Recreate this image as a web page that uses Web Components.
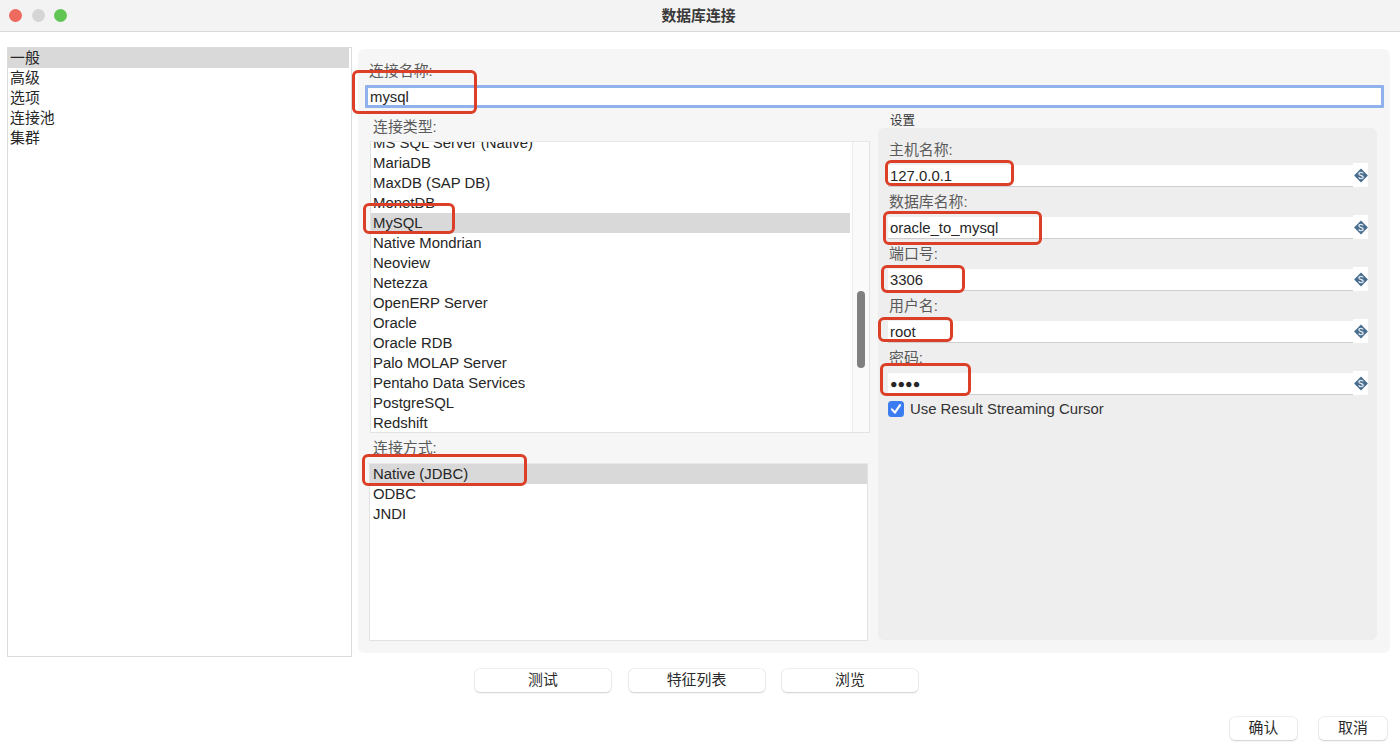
<!DOCTYPE html>
<html lang="zh">
<head>
<meta charset="utf-8">
<title>数据库连接</title>
<style>
  html, body { margin: 0; height: 100%; background: #fff; }
  body {
    font-family: "Liberation Sans", "Noto Sans CJK SC", sans-serif;
    font-size: 14.9px;
    color: #222;
    overflow: hidden;
  }
</style>
</head>
<body>
<db-dialog>
  <nav-list slot="nav">
    <list-row selected>一般</list-row>
    <list-row>高级</list-row>
    <list-row>选项</list-row>
    <list-row>连接池</list-row>
    <list-row>集群</list-row>
  </nav-list>

  <conn-panel slot="panel">
    <span slot="name-label">连接名称:</span>
    <span slot="name-value">mysql</span>

    <span slot="type-label">连接类型:</span>
    <list-box slot="type-list" scrollbar style="height:292px;--shift:-9px;--row-pad:2px">
      <list-row>MS SQL Server (Native)</list-row>
      <list-row>MariaDB</list-row>
      <list-row>MaxDB (SAP DB)</list-row>
      <list-row>MonetDB</list-row>
      <list-row selected>MySQL</list-row>
      <list-row>Native Mondrian</list-row>
      <list-row>Neoview</list-row>
      <list-row>Netezza</list-row>
      <list-row>OpenERP Server</list-row>
      <list-row>Oracle</list-row>
      <list-row>Oracle RDB</list-row>
      <list-row>Palo MOLAP Server</list-row>
      <list-row>Pentaho Data Services</list-row>
      <list-row>PostgreSQL</list-row>
      <list-row>Redshift</list-row>
    </list-box>

    <span slot="access-label">连接方式:</span>
    <list-box slot="access-list" style="height:178px;--row-pad:3px">
      <list-row selected>Native (JDBC)</list-row>
      <list-row>ODBC</list-row>
      <list-row>JNDI</list-row>
    </list-box>

    <span slot="settings-label">设置</span>
    <setting-field slot="settings" label="主机名称:" value="127.0.0.1"></setting-field>
    <setting-field slot="settings" label="数据库名称:" value="oracle_to_mysql"></setting-field>
    <setting-field slot="settings" label="端口号:" value="3306"></setting-field>
    <setting-field slot="settings" label="用户名:" value="root"></setting-field>
    <setting-field slot="settings" label="密码:" value="●●●●" secret></setting-field>
    <check-row slot="settings">Use Result Streaming Cursor</check-row>
  </conn-panel>

  <mac-button slot="actions">测试</mac-button>
  <mac-button slot="actions">特征列表</mac-button>
  <mac-button slot="actions">浏览</mac-button>

  <mac-button slot="footer" style="width:67px">确认</mac-button>
  <mac-button slot="footer" style="width:68px">取消</mac-button>

  <!-- red annotation boxes drawn over the screenshot -->
  <red-mark slot="marks" box="352,70,125,44"></red-mark>
  <red-mark slot="marks" box="363,203,92,31"></red-mark>
  <red-mark slot="marks" box="362,454,165,32"></red-mark>
  <red-mark slot="marks" box="885,160,129,26"></red-mark>
  <red-mark slot="marks" box="883,211,159,34"></red-mark>
  <red-mark slot="marks" box="881,265,84,28"></red-mark>
  <red-mark slot="marks" box="878,317,75,25"></red-mark>
  <red-mark slot="marks" box="880,363,91,33"></red-mark>
</db-dialog>

<script>
// whole window: title bar, nav + panel, button rows, annotation layer
class DbDialog extends HTMLElement {
  constructor() {
    super();
    this.attachShadow({ mode: "open" });
    this.shadowRoot.innerHTML = `
      <style>
        :host { display: block; position: relative; width: 1400px; height: 753px; overflow: hidden; }
        .bar {
          height: 31px; background: #f4f3f3; border-bottom: 1px solid #d9d9d9;
          display: flex; align-items: center; position: relative;
        }
        .lights { display: flex; gap: 9.5px; padding-left: 9px; }
        .lights i { width: 13px; height: 13px; border-radius: 50%; display: block; }
        .title {
          flex: 1; text-align: center; padding: 0 70px 3px 0;
          font-weight: bold; font-size: 14.8px; color: #3a3a3a;
        }
        .main { display: flex; gap: 6px; padding: 15px 10px 0 7px; align-items: flex-start; }
        .actions { display: flex; justify-content: center; gap: 17.5px; margin-top: 12px; padding-right: 7px; }
        .footer { display: flex; justify-content: flex-end; gap: 22px; margin-top: 25px; padding-right: 13px; }
      </style>
      <div class="bar">
        <div class="lights">
          <i style="background:#ee6a5f"></i><i style="background:#d6d5d5"></i><i style="background:#61c554"></i>
        </div>
        <div class="title">数据库连接</div>
      </div>
      <div class="main"><slot name="nav"></slot><slot name="panel"></slot></div>
      <div class="actions"><slot name="actions"></slot></div>
      <div class="footer"><slot name="footer"></slot></div>
      <slot name="marks"></slot>
    `;
  }
}

// the left-hand category list
class NavList extends HTMLElement {
  constructor() {
    super();
    this.attachShadow({ mode: "open" });
    this.shadowRoot.innerHTML = `
      <style>
        :host {
          display: block; width: 345px; height: 610px; box-sizing: border-box;
          background: #fff; border: 1px solid #dcdcdc; padding-right: 2px;
          --row-pad: 2px;
        }
      </style>
      <slot></slot>
    `;
  }
}

// one row in any list
class ListRow extends HTMLElement {
  constructor() {
    super();
    this.attachShadow({ mode: "open" });
    this.shadowRoot.innerHTML = `
      <style>
        :host {
          display: block; height: 20px; line-height: 20px; white-space: nowrap;
          padding-left: var(--row-pad, 3px); color: #262626;
        }
        :host([selected]) { background: #d9d9d9; }
      </style>
      <slot></slot>
    `;
  }
}

// bordered list, optionally with a scrollbar track
class ListBox extends HTMLElement {
  constructor() {
    super();
    this.attachShadow({ mode: "open" });
    this.shadowRoot.innerHTML = `
      <style>
        :host {
          display: flex; box-sizing: border-box; background: #fff;
          border: 1px solid #e2e2e2; border-top-color: #e8e8e8; overflow: hidden;
        }
        .rows { flex: 1; min-width: 0; margin-top: var(--shift, 0); }
        .track { display: none; width: 16px; flex: none; margin-left: 2px; background: #fafafa; border-left: 1px solid #ececec; }
        :host([scrollbar]) .track { display: block; }
        .thumb { width: 8px; height: 77px; margin: 149px 0 0 4px; border-radius: 4px; background: #808080; }
      </style>
      <div class="rows"><slot></slot></div>
      <div class="track"><div class="thumb"></div></div>
    `;
  }
}

// right grey panel contents + connection lists
class ConnPanel extends HTMLElement {
  constructor() {
    super();
    this.attachShadow({ mode: "open" });
    this.shadowRoot.innerHTML = `
      <style>
        :host {
          display: block; width: 1032px; height: 604px; box-sizing: border-box;
          margin-top: 2px; padding-top: 14px; background: #f6f6f6; border-radius: 6px;
        }
        .lbl { color: #5a5a5a; line-height: 16px; }
        .name-lbl { height: 22px; padding-left: 11px; }
        .name-input {
          margin-left: 7px; width: 1019px; height: 23px; box-sizing: border-box;
          border: 3px solid #8fb1ec; background: #fff; line-height: 19px;
          padding-left: 2px; color: #262626; border-radius: 1px;
        }
        .cols { display: flex; gap: 8px; padding-left: 12px; }
        .left { width: 500px; }
        .right { width: 499px; }
        .type-lbl { height: 22px; padding: 11px 0 0 3px; box-sizing: content-box; }
        .access-lbl { height: 16px; padding: 7px 0 7px 3px; }
        .access { margin-left: -1px; width: 499px; }
        .set-lbl { height: 20px; line-height: 26px; padding-left: 12px; font-size: 12.5px; color: #333; }
        .set-box {
          height: 512px; box-sizing: border-box; padding: 11px 9px 0 10px;
          background: #eeeeee; border-radius: 6px;
          display: flex; flex-direction: column; gap: 4px;
        }
        ::slotted(list-box) { display: flex; }
      </style>
      <div class="lbl name-lbl"><slot name="name-label"></slot></div>
      <div class="name-input"><slot name="name-value"></slot></div>
      <div class="cols">
        <div class="left">
          <div class="lbl type-lbl"><slot name="type-label"></slot></div>
          <slot name="type-list"></slot>
          <div class="lbl access-lbl"><slot name="access-label"></slot></div>
          <div class="access"><slot name="access-list"></slot></div>
        </div>
        <div class="right">
          <div class="set-lbl"><slot name="settings-label"></slot></div>
          <div class="set-box"><slot name="settings"></slot></div>
        </div>
      </div>
    `;
  }
}

// label + input + variable-substitution diamond
class SettingField extends HTMLElement {
  constructor() {
    super();
    this.attachShadow({ mode: "open" });
    this.shadowRoot.innerHTML = `
      <style>
        :host { display: block; }
        .lbl { height: 26px; line-height: 22px; padding-left: 1px; color: #5a5a5a; }
        .row { display: flex; height: 22px; }
        .val {
          flex: 1; box-sizing: border-box; background: #fff; border-bottom: 1px solid #cfcfcf;
          padding-left: 2px; line-height: 22px; color: #262626;
        }
        :host([secret]) .val { font-size: 12.5px; line-height: 23px; }
        .var {
          width: 15px; height: 24px; margin-top: -2px; background: #fff;
          display: flex; align-items: center; justify-content: center;
        }
      </style>
      <div class="lbl"></div>
      <div class="row">
        <div class="val"></div>
        <div class="var">
          <svg width="15" height="15" viewBox="-.5 0 15 15">
            <path d="M7.5.6 14.4 7.5 7.5 14.4.6 7.5Z" fill="#476c8e"/>
            <path d="M9.7 5.5C9.3 4.7 8.5 4.3 7.5 4.3 6.3 4.3 5.4 4.9 5.4 5.9 5.4 8 9.7 7 9.7 9.1 9.7 10.1 8.8 10.7 7.5 10.7 6.4 10.7 5.6 10.2 5.2 9.4" fill="none" stroke="#dfe7ee" stroke-width="1.3"/>
          </svg>
        </div>
      </div>
    `;
  }
  connectedCallback() {
    this.shadowRoot.querySelector(".lbl").textContent = this.getAttribute("label");
    this.shadowRoot.querySelector(".val").textContent = this.getAttribute("value");
  }
}

// checked checkbox with label
class CheckRow extends HTMLElement {
  constructor() {
    super();
    this.attachShadow({ mode: "open" });
    this.shadowRoot.innerHTML = `
      <style>
        :host { display: flex; align-items: center; gap: 6px; height: 16px; margin-top: 2px; color: #333; }
        svg { flex: none; }
      </style>
      <svg width="16" height="16" viewBox="0 0 16 16">
        <rect width="16" height="16" rx="3.5" fill="#3b7cf0"/>
        <path d="M4 8.4 6.9 11.6 12 4.2" fill="none" stroke="#fff" stroke-width="2.1" stroke-linecap="round" stroke-linejoin="round"/>
      </svg>
      <span><slot></slot></span>
    `;
  }
}

// mac style push button
class MacButton extends HTMLElement {
  constructor() {
    super();
    this.attachShadow({ mode: "open" });
    this.shadowRoot.innerHTML = `
      <style>
        :host {
          display: block; width: 136px; height: 23px; box-sizing: border-box;
          text-align: center; line-height: 22px; background: #fff; color: #2a2a2a;
          border-radius: 5px;
          box-shadow: 0 0 0 .5px #dedede, 0 1px 1.5px rgba(0,0,0,.22);
        }
      </style>
      <slot></slot>
    `;
  }
}

// red annotation rectangle, sits over the form
class RedMark extends HTMLElement {
  constructor() {
    super();
    this.attachShadow({ mode: "open" });
    this.shadowRoot.innerHTML = `
      <style>
        :host {
          display: block; position: absolute; box-sizing: border-box;
          border: 3px solid #dc3f28; border-radius: 6px; pointer-events: none;
        }
      </style>
    `;
  }
  connectedCallback() {
    const [x, y, w, h] = this.getAttribute("box").split(",");
    this.style.cssText = `left:${x}px;top:${y}px;width:${w}px;height:${h}px`;
  }
}

customElements.define("db-dialog", DbDialog);
customElements.define("nav-list", NavList);
customElements.define("list-row", ListRow);
customElements.define("list-box", ListBox);
customElements.define("conn-panel", ConnPanel);
customElements.define("setting-field", SettingField);
customElements.define("check-row", CheckRow);
customElements.define("mac-button", MacButton);
customElements.define("red-mark", RedMark);
</script>
</body>
</html>
